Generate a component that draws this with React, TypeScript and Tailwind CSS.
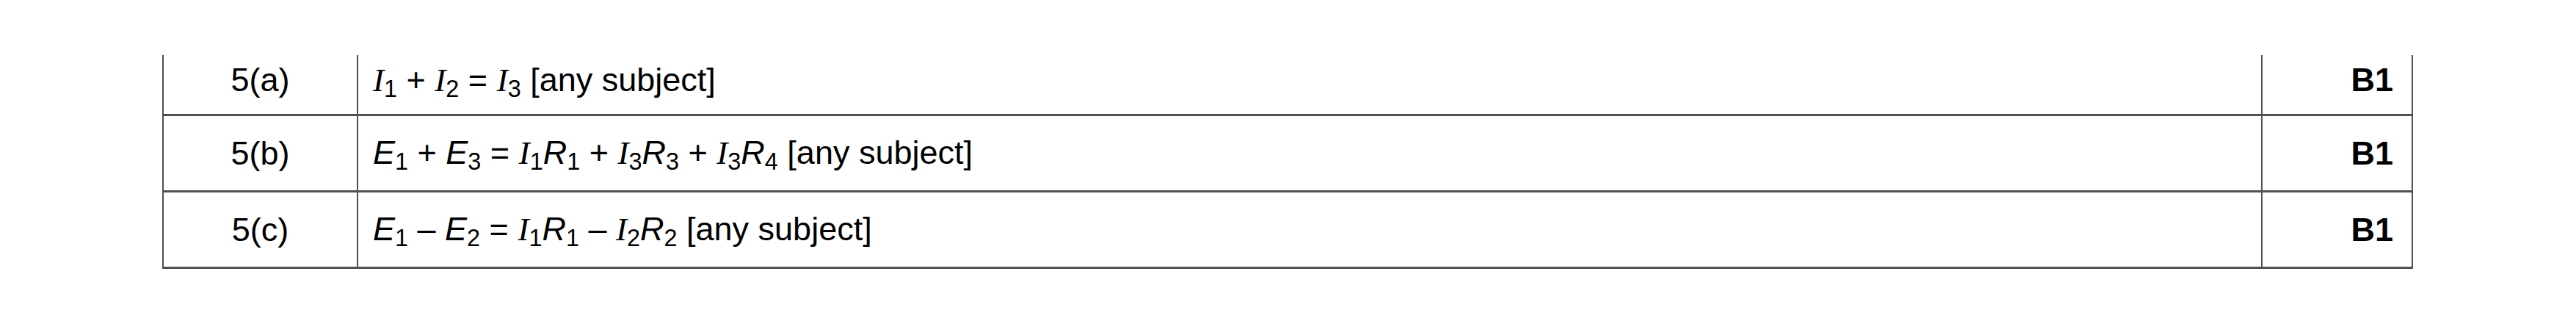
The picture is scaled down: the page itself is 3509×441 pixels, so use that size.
const sans = "font-['Liberation_Sans',Arial,sans-serif]";

function V({ children }: { children: string }) {
  // italic serif variable (I)
  return <i className="font-['Liberation_Serif',serif] italic">{children}</i>;
}

function S({ children }: { children: string }) {
  // italic sans variable (E, R)
  return <i className="italic">{children}</i>;
}

function Sub({ children }: { children: string }) {
  return <sub className="text-[0.72em] not-italic">{children}</sub>;
}

type Row = { label: string; answer: React.ReactNode; mark: string };

const rows: Row[] = [
  {
    label: "5(a)",
    answer: (
      <>
        <V>I</V>
        <Sub>1</Sub> + <V>I</V>
        <Sub>2</Sub> = <V>I</V>
        <Sub>3</Sub> [any subject]
      </>
    ),
    mark: "B1",
  },
  {
    label: "5(b)",
    answer: (
      <>
        <S>E</S>
        <Sub>1</Sub> + <S>E</S>
        <Sub>3</Sub> = <V>I</V>
        <Sub>1</Sub>
        <S>R</S>
        <Sub>1</Sub> + <V>I</V>
        <Sub>3</Sub>
        <S>R</S>
        <Sub>3</Sub> + <V>I</V>
        <Sub>3</Sub>
        <S>R</S>
        <Sub>4</Sub> [any subject]
      </>
    ),
    mark: "B1",
  },
  {
    label: "5(c)",
    answer: (
      <>
        <S>E</S>
        <Sub>1</Sub> – <S>E</S>
        <Sub>2</Sub> = <V>I</V>
        <Sub>1</Sub>
        <S>R</S>
        <Sub>1</Sub> – <V>I</V>
        <Sub>2</Sub>
        <S>R</S>
        <Sub>2</Sub> [any subject]
      </>
    ),
    mark: "B1",
  },
];

export default function App() {
  return (
    <div className={`w-[3509px] h-[441px] bg-white pt-[75px] pl-[221px] text-black ${sans}`}>
      <div className="w-[3066px] border-x-2 border-b-[3px] border-[#505050]">
        {rows.map((r, i) => (
          <div
            key={r.label}
            className={
              i === 0
                ? "grid grid-cols-[265px_2594px_1fr] h-[80px] items-start text-[45px]"
                : "grid grid-cols-[265px_2594px_1fr] h-[104px] items-center border-t-[3px] border-[#505050] text-[45px]"
            }
          >
            <div className="h-full flex items-center justify-center border-r-2 border-[#505050]">
              <span className={i === 0 ? "self-start" : ""}>{r.label}</span>
            </div>
            <div className="h-full flex items-center pl-[20px] border-r-2 border-[#505050] whitespace-pre">
              <span className={i === 0 ? "self-start" : ""}>{r.answer}</span>
            </div>
            <div className="h-full flex items-center justify-end pr-[25px] font-bold">
              <span className={i === 0 ? "self-start" : ""}>{r.mark}</span>
            </div>
          </div>
        ))}
      </div>
    </div>
  );
}
